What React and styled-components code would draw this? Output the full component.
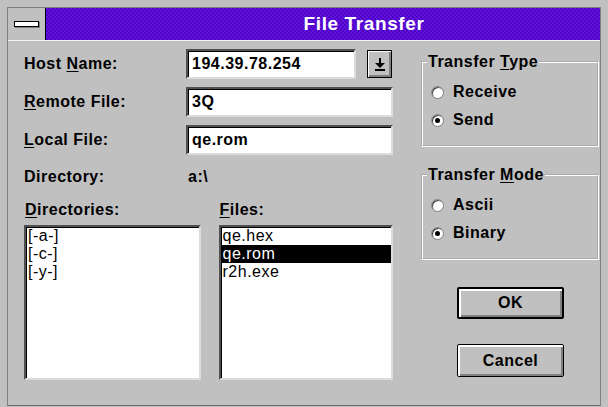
import styled, { createGlobalStyle } from 'styled-components';

const GlobalStyle = createGlobalStyle`
  body {
    margin: 0;
    background: #c0c0c0;
    font-family: "Liberation Sans", Arial, sans-serif;
  }
`;

const directories = ['[-a-]', '[-c-]', '[-y-]'];
const files = ['qe.hex', 'qe.rom', 'r2h.exe'];

const App = () => {
  return (
    <>
      <GlobalStyle />
      <Window>
        <Client>
          <TitleBar>
            <SysMenu>
              <SysBar />
            </SysMenu>
            <Caption>File Transfer</Caption>
          </TitleBar>

          <Body>
            <LeftPane>
              <FormGrid>
                <Label>Host <u>N</u>ame:</Label>
                <HostRow>
                  <Field $width={170} readOnly value="194.39.78.254" />
                  <DropButton>
                    <svg width="10" height="13" viewBox="0 0 10 13">
                      <rect x="4" y="0" width="2" height="5" fill="#000" />
                      <polygon points="0,5 10,5 5,10" fill="#000" />
                      <rect x="0" y="11" width="10" height="2" fill="#000" />
                    </svg>
                  </DropButton>
                </HostRow>

                <Label><u>R</u>emote File:</Label>
                <Field readOnly value="3Q" />

                <Label><u>L</u>ocal File:</Label>
                <Field readOnly value="qe.rom" />
              </FormGrid>

              <DirectoryLine>
                <Label>Directory:</Label>
                <DirValue>a:\</DirValue>
              </DirectoryLine>

              <ListsRow>
                <ListColumn $width={177}>
                  <Label><u>D</u>irectories:</Label>
                  <ListBox>
                    {directories.map(d => (
                      <Item key={d}>{d}</Item>
                    ))}
                  </ListBox>
                </ListColumn>
                <ListColumn $width={175}>
                  <Label><u>F</u>iles:</Label>
                  <ListBox>
                    {files.map(f => (
                      <Item key={f} $selected={f === 'qe.rom'}>{f}</Item>
                    ))}
                  </ListBox>
                </ListColumn>
              </ListsRow>
            </LeftPane>

            <RightPane>
              <Group>
                <Legend>Transfer <u>T</u>ype</Legend>
                <RadioRow><Radio /> Receive</RadioRow>
                <RadioRow><Radio $checked /> Send</RadioRow>
              </Group>
              <Group $gap={19}>
                <Legend>Transfer <u>M</u>ode</Legend>
                <RadioRow><Radio /> Ascii</RadioRow>
                <RadioRow><Radio $checked /> Binary</RadioRow>
              </Group>

              <ButtonStack>
                <PushButton $default $height={32}>OK</PushButton>
                <PushButton $height={33}>Cancel</PushButton>
              </ButtonStack>
            </RightPane>
          </Body>
        </Client>
      </Window>
    </>
  );
};

export default App;

const Window = styled.div`
  width: 608px;
  height: 407px;
  box-sizing: border-box;
  padding: 7px 7px 1px;
  background: #c0c0c0;
  display: flex;
`;

const Client = styled.div`
  flex: 1;
  display: flex;
  flex-direction: column;
  border: 1px solid #808080;
  border-bottom-color: #6a6a6a;
`;

const TitleBar = styled.div`
  height: 32px;
  display: flex;
  border-bottom: 1px solid #f4f4f4;
`;

const SysMenu = styled.div`
  width: 37px;
  border-right: 1px solid #000;
  background: #c0c0c0;
  display: flex;
  align-items: center;
  justify-content: center;
`;

const SysBar = styled.div`
  width: 25px;
  height: 6px;
  box-sizing: border-box;
  background: #fff;
  border: 1px solid #000;
  box-shadow: 1px 1px 0 #808080;
`;

const Caption = styled.div`
  flex: 1;
  display: flex;
  align-items: center;
  justify-content: center;
  padding-left: 82px;
  background-color: #6410dc;
  background-image: conic-gradient(#4a06c4 25%, transparent 0 50%, #4a06c4 0 75%, transparent 0);
  background-size: 4px 4px;
  color: #fff;
  font-size: 19px;
  font-weight: bold;
  letter-spacing: 0.6px;
`;

const Body = styled.div`
  flex: 1;
  display: flex;
  padding: 8px 0 0 16px;
`;

const LeftPane = styled.div`
  width: 369px;
  display: flex;
  flex-direction: column;
`;

const FormGrid = styled.div`
  display: grid;
  grid-template-columns: 162px 1fr;
  row-gap: 8px;
  align-items: center;
`;

const Label = styled.div`
  font-size: 16px;
  font-weight: bold;
  letter-spacing: 0.5px;
  line-height: 18px;
  color: #000;
  u {
    text-underline-offset: 2px;
  }
`;

const HostRow = styled.div`
  display: flex;
  align-items: center;
  gap: 11px;
`;

const Field = styled.input`
  box-sizing: border-box;
  width: ${p => (p.$width ? `${p.$width}px` : '100%')};
  height: 30px;
  margin: 0;
  padding: 0 4px;
  background: #fff;
  border: 2px solid;
  border-color: #505050 #dcdcdc #dcdcdc #505050;
  box-shadow: inset 1px 1px 0 #000;
  font-family: "Liberation Sans", Arial, sans-serif;
  font-size: 16px;
  font-weight: bold;
  letter-spacing: 0.5px;
  color: #000;
  outline: none;
`;

const DropButton = styled.div`
  box-sizing: border-box;
  width: 25px;
  height: 28px;
  display: flex;
  align-items: center;
  justify-content: center;
  background: #c0c0c0;
  border: 1px solid #000;
  box-shadow: inset 1px 1px 0 #fff, inset -2px -2px 0 #808080;
`;

const DirectoryLine = styled.div`
  display: grid;
  grid-template-columns: 164px 1fr;
  margin-top: 13px;
  height: 18px;
`;

const DirValue = styled(Label)``;

const ListsRow = styled.div`
  display: flex;
  gap: 18px;
  margin-top: 15px;
`;

const ListColumn = styled.div`
  width: ${p => p.$width}px;
  display: flex;
  flex-direction: column;
  gap: 6px;
  & > ${Label} {
    padding-left: 1px;
  }
`;

const ListBox = styled.ul`
  box-sizing: border-box;
  height: 155px;
  margin: 0;
  padding: 0;
  list-style: none;
  background: #fff;
  border: 2px solid;
  border-color: #505050 #dcdcdc #dcdcdc #505050;
  box-shadow: inset 1px 1px 0 #000;
`;

const Item = styled.li`
  height: 18px;
  line-height: 18px;
  padding-left: 2px;
  font-size: 16px;
  letter-spacing: 0.5px;
  background: ${p => (p.$selected ? '#000' : 'transparent')};
  color: ${p => (p.$selected ? '#fff' : '#000')};
`;

const RightPane = styled.div`
  width: 178px;
  margin: 4px 0 0 28px;
  display: flex;
  flex-direction: column;
`;

const Group = styled.fieldset`
  margin: ${p => p.$gap || 0}px 0 0;
  padding: 7px 0 11px 8px;
  min-width: 0;
  border: 2px groove #fff;
`;

const Legend = styled.legend`
  margin-left: -4px;
  padding: 0 1px;
  font-size: 16px;
  font-weight: bold;
  letter-spacing: 0.5px;
  line-height: 18px;
  u {
    text-underline-offset: 2px;
  }
`;

const RadioRow = styled.div`
  height: 28px;
  display: flex;
  align-items: center;
  gap: 9px;
  font-size: 16px;
  font-weight: bold;
  letter-spacing: 0.5px;
`;

const Radio = styled.span`
  position: relative;
  box-sizing: border-box;
  width: 13px;
  height: 13px;
  border-radius: 50%;
  background: #fff;
  border: 1px solid #808080;
  box-shadow: inset 1px 1px 0 #404040;
  &::after {
    content: '';
    display: ${p => (p.$checked ? 'block' : 'none')};
    position: absolute;
    left: 3px;
    top: 3px;
    width: 5px;
    height: 5px;
    border-radius: 50%;
    background: #000;
  }
`;

const ButtonStack = styled.div`
  display: flex;
  flex-direction: column;
  gap: 25px;
  margin: 27px 0 0 36px;
`;

const PushButton = styled.div`
  box-sizing: border-box;
  width: 107px;
  height: ${p => p.$height}px;
  display: flex;
  align-items: center;
  justify-content: center;
  background: #c0c0c0;
  border: ${p => (p.$default ? 2 : 1)}px solid #000;
  border-radius: 2px;
  box-shadow: inset 1px 1px 0 #fff, inset 2px 2px 0 #fff, inset -2px -2px 0 #808080;
  font-size: 16px;
  font-weight: bold;
  letter-spacing: 0.5px;
  color: #000;
`;
